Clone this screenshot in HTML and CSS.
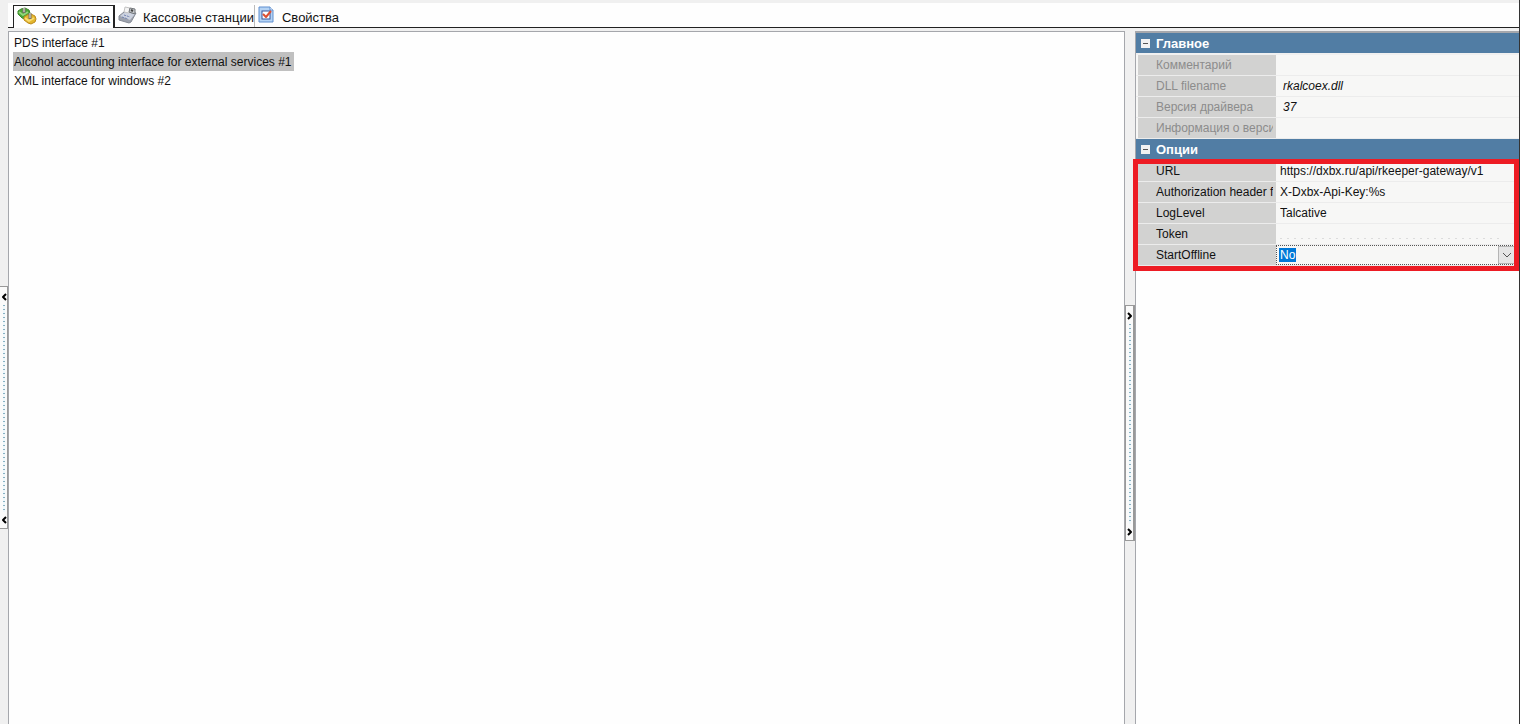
FILE: index.html
```html
<!DOCTYPE html>
<html lang="ru">
<head>
    <meta charset="UTF-8">
    <meta name="viewport" content="width=device-width, initial-scale=1.0">
    <title>Устройства</title>
    <link rel="stylesheet" href="styles.css">
</head>
<body>
    <!-- Left splitter -->
    <div class="splitter splitter-left">
        <button class="grip" aria-label="Свернуть левую панель">
            <svg width="6" height="8" viewBox="0 0 6 8"><path d="M5 1L2 4l3 3"/></svg>
            <span class="dots"></span>
            <svg width="6" height="8" viewBox="0 0 6 8"><path d="M5 1L2 4l3 3"/></svg>
        </button>
    </div>

    <div class="window">
        <!-- Tabs -->
        <div class="tabs">
            <button class="tab active">
                <svg width="20" height="18" viewBox="0 0 20 18">
                    <path d="M1 4l3-2 4-1 4 2 1 3-1 4-4 2-3-1-4-4z" fill="#49a535" stroke="#3c8b2c"/>
                    <path d="M2 5l4 3 5-3" fill="none" stroke="#93d67c" stroke-width="2"/>
                    <path d="M7 10l3-2 4-1 4 2 1 3-1 3-4 2-3-1-4-3z" fill="#e3b62d" stroke="#bd8a1b"/>
                    <path d="M8 11l4 3 5-3" fill="none" stroke="#f8dc72" stroke-width="2"/>
                    <path d="M7 1v5M13 6v6" stroke="#78736a" stroke-width="3"/>
                    <path d="M7 1v4M13 6v5" stroke="#e4e4da"/>
                </svg>
                Устройства
            </button>
            <button class="tab">
                <svg width="20" height="18" viewBox="0 0 20 18">
                    <path d="M1 10l5-4 12 1-5 9-2 1-10-3z" fill="#9da2ad" stroke="#868b96"/>
                    <path d="M2 10l5-4 10 2-5 6z" fill="#ccd2df"/>
                    <path d="M6 6l1-5 5 1-1 5z" fill="#f4f4f4" stroke="#c2c2c2"/>
                    <path d="M11 6l1-4 5 1v5z" fill="#c5c8cb" stroke="#73777b"/>
                    <path d="M13 4l2 1" stroke="#444" stroke-width="2"/>
                    <path d="M6 9l6 2M4 11l6 2" stroke="#7384b3" stroke-dasharray="2 1"/>
                </svg>
                Кассовые станции
            </button>
            <button class="tab">
                <svg width="16" height="18" viewBox="0 0 16 18">
                    <path d="M1 1h11l3 3v12H1z" fill="#b5d3f4" stroke="#5f8fd0"/>
                    <path d="M12 1v3h3" fill="#fff" stroke="#5f8fd0"/>
                    <rect x="4" y="5" width="8" height="8" fill="#fff" stroke="#34549b"/>
                    <path d="M5 8l3 3 5-6" fill="none" stroke="#dc4f32" stroke-width="2"/>
                </svg>
                Свойства
            </button>
        </div>

        <div class="content">
            <!-- Device list -->
            <ul class="devices">
                <li><button>PDS interface #1</button></li>
                <li><button class="selected">Alcohol accounting interface for external services #1</button></li>
                <li><button>XML interface for windows #2</button></li>
            </ul>

            <div class="splitter splitter-right">
                <button class="grip" aria-label="Свернуть правую панель">
                    <svg width="6" height="8" viewBox="0 0 6 8"><path d="M1 1l3 3-3 3"/></svg>
                    <span class="dots"></span>
                    <svg width="6" height="8" viewBox="0 0 6 8"><path d="M1 1l3 3-3 3"/></svg>
                </button>
            </div>

            <!-- Properties -->
            <div class="props">
                <button class="group-title"><span class="minus"></span>Главное</button>
                <div class="group readonly">
                    <div class="row">
                        <label for="comment">Комментарий</label>
                        <input type="text" id="comment" readonly>
                    </div>
                    <div class="row">
                        <label for="dll">DLL filename</label>
                        <input type="text" id="dll" value="rkalcoex.dll" readonly>
                    </div>
                    <div class="row">
                        <label for="version">Версия драйвера</label>
                        <input type="text" id="version" value="37" readonly>
                    </div>
                    <div class="row">
                        <label for="info">Информация о версии</label>
                        <input type="text" id="info" readonly>
                    </div>
                </div>

                <button class="group-title"><span class="minus"></span>Опции</button>
                <div class="group marked">
                    <div class="row">
                        <label for="url">URL</label>
                        <input type="text" id="url" value="https://dxbx.ru/api/rkeeper-gateway/v1">
                    </div>
                    <div class="row">
                        <label for="auth">Authorization header fo</label>
                        <input type="text" id="auth" value="X-Dxbx-Api-Key:%s">
                    </div>
                    <div class="row">
                        <label for="loglevel">LogLevel</label>
                        <input type="text" id="loglevel" value="Talcative">
                    </div>
                    <div class="row">
                        <label for="token">Token</label>
                        <input type="text" id="token" class="erased">
                    </div>
                    <div class="row">
                        <label for="offline">StartOffline</label>
                        <div class="dropdown">
                            <select id="offline">
                                <option>No</option>
                                <option>Yes</option>
                            </select>
                            <span class="arrow">
                                <svg width="10" height="6" viewBox="0 0 10 6"><path d="M1 1l4 4 4-4"/></svg>
                            </span>
                        </div>
                    </div>
                </div>
            </div>
        </div>
    </div>
</body>
</html>
```
FILE: styles.css
```css
* {
    box-sizing: border-box;
}

body {
    display: flex;
    height: 100vh;
    margin: 0;
    overflow: hidden;
    background: #fefefe;
    color: #111;
    font-family: "Liberation Sans", Arial, sans-serif;
    font-size: 12px;
    border-right: 1px solid #333;
}

button, input, select {
    font: inherit;
    color: inherit;
    margin: 0;
    padding: 0;
    border: none;
    border-radius: 0;
    background: none;
    outline: none;
}

button {
    cursor: pointer;
}

svg path {
    stroke-linejoin: round;
}

/* Splitters */
.splitter {
    display: flex;
    align-items: center;
    flex: none;
    width: 10px;
    background: #f0f0f0;
}

.splitter-left {
    width: 8px;
    padding-top: 90px;
}

.splitter-right {
    padding-top: 90px;
}

.grip {
    display: flex;
    flex-direction: column;
    align-items: center;
    gap: 4px;
    width: 10px;
    height: 236px;
    padding: 6px 0 4px;
    border: 1px solid #999;
    border-right: 2px solid #999;
    background: #fafafa;
}

.splitter-left .grip {
    width: 8px;
    height: 243px;
    border-left: none;
    border-right-width: 1px;
}

.grip svg {
    flex: none;
    fill: none;
    stroke: #000;
    stroke-width: 2;
}

.dots {
    flex: 1;
    width: 2px;
    background: repeating-linear-gradient(#86b0c2 0 1px, #eef7fb 1px 4px);
}

.window {
    display: flex;
    flex-direction: column;
    flex: 1;
    min-width: 0;
    border-top: 3px solid #f0f0f0;
}

/* Tabs */
.tabs {
    display: flex;
    flex: none;
    height: 25px;
    padding: 2px 0 0 5px;
    box-shadow: inset 0 -1px #222;
}

.tab {
    display: flex;
    align-items: center;
    gap: 5px;
    height: 22px;
    padding: 2px 0 0 3px;
    font-size: 13px;
    white-space: nowrap;
}

.tab svg {
    flex: none;
    margin-top: -4px;
}

.tab + .tab + .tab {
    gap: 8px;
    border-left: 1px solid #bbb;
}

.tab.active {
    height: 23px;
    padding-right: 3px;
    border: 1px solid #222;
    border-width: 1px 2px 0 1px;
    background: #fefefe;
}

.content {
    display: flex;
    flex: 1;
    min-height: 0;
    border-top: 3px solid #f0f0f0;
}

/* Device list */
.devices {
    flex: 1;
    margin: 0;
    padding: 1px 4px;
    list-style: none;
    border: 1px solid #a5a7ac;
    border-bottom: none;
}

.devices li {
    display: flex;
    height: 19px;
}

.devices button {
    padding: 0 3px 0 1px;
}

.devices .selected {
    background: #c0c0c0;
}

/* Property grid */
.props {
    flex: none;
    width: 384px;
    border-top: 2px solid #a5a7ac;
    border-left: 1px solid #a5a7ac;
}

.group-title {
    display: flex;
    align-items: center;
    gap: 6px;
    width: 100%;
    height: 22px;
    padding-left: 5px;
    border-bottom: 2px solid #f0f0f0;
    background: #517da4;
    color: #fff;
    font-size: 13px;
    font-weight: bold;
}

.minus {
    display: flex;
    align-items: center;
    width: 9px;
    height: 9px;
    padding: 0 2px;
    background: #f2f2f2;
}

.minus::before {
    content: "";
    flex: 1;
    height: 1px;
    background: #555;
}

.row {
    display: flex;
    height: 21px;
    padding-left: 2px;
    border-bottom: 1px solid #ececec;
    background: #f7f7f6;
}

.row label {
    flex: none;
    width: 138px;
    padding-left: 18px;
    border-right: 3px solid #d2d2d1;
    background: #d2d2d1;
    line-height: 20px;
    white-space: nowrap;
    overflow: hidden;
}

.row input {
    flex: 1;
    min-width: 0;
    padding-left: 4px;
}

.readonly label {
    color: #8c8c8c;
}

.readonly input {
    font-style: italic;
    padding-left: 7px;
}

.row .erased {
    background: repeating-linear-gradient(90deg, #dcdcdc 0 2px, transparent 2px 7px) 4px 14px / 220px 1px no-repeat;
}

/* Red frame over the options */
.marked {
    position: relative;
}

.marked::after {
    content: "";
    position: absolute;
    inset: -2px 0 -5px -3px;
    border: 5px solid #ed1c24;
    pointer-events: none;
}

.dropdown {
    position: relative;
    flex: 1;
    margin-right: 4px;
}

.dropdown select {
    appearance: none;
    display: block;
    width: 100%;
    height: 20px;
    padding-left: 3px;
    border: 1px dotted #555;
    background: linear-gradient(#0078d7, #0078d7) 2px 2px / 17px 14px no-repeat;
    color: #fff;
}

.dropdown option {
    color: #111;
}

.arrow {
    position: absolute;
    top: 1px;
    right: 0;
    display: flex;
    align-items: center;
    justify-content: center;
    width: 17px;
    height: 18px;
    border: 1px solid #b5b5b5;
    background: #e6e6e6;
    pointer-events: none;
}

.arrow path {
    fill: none;
    stroke: #555;
}
```
